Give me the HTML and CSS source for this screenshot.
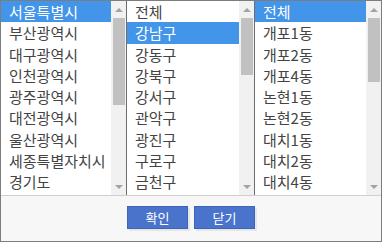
FILE: index.html
```html
<!DOCTYPE html>
<html lang="ko">
<head>
    <meta charset="UTF-8">
    <meta name="viewport" content="width=device-width, initial-scale=1.0">
    <title>지역 선택</title>
    <link rel="stylesheet" href="styles.css">
</head>
<body>

    <div class="dialog">
        <div class="lists">
            <!-- 시/도 -->
            <div class="list list-sido">
                <ul class="items">
                    <li class="on">서울특별시</li>
                    <li>부산광역시</li>
                    <li>대구광역시</li>
                    <li>인천광역시</li>
                    <li>광주광역시</li>
                    <li>대전광역시</li>
                    <li>울산광역시</li>
                    <li>세종특별자치시</li>
                    <li>경기도</li>
                </ul>
                <div class="scrollbar">
                    <span class="btn-arrow"><i class="arrow up"></i></span>
                    <span class="thumb" style="height: 87px"></span>
                    <span class="track-rest"></span>
                    <span class="btn-arrow"><i class="arrow down"></i></span>
                </div>
            </div>

            <!-- 시/군/구 -->
            <div class="list list-gugun">
                <ul class="items">
                    <li>전체</li>
                    <li class="on">강남구</li>
                    <li>강동구</li>
                    <li>강북구</li>
                    <li>강서구</li>
                    <li>관악구</li>
                    <li>광진구</li>
                    <li>구로구</li>
                    <li>금천구</li>
                </ul>
                <div class="scrollbar">
                    <span class="btn-arrow"><i class="arrow up"></i></span>
                    <span class="thumb" style="height: 57px"></span>
                    <span class="track-rest"></span>
                    <span class="btn-arrow"><i class="arrow down"></i></span>
                </div>
            </div>

            <!-- 읍/면/동 -->
            <div class="list list-dong">
                <ul class="items">
                    <li class="on">전체</li>
                    <li>개포1동</li>
                    <li>개포2동</li>
                    <li>개포4동</li>
                    <li>논현1동</li>
                    <li>논현2동</li>
                    <li>대치1동</li>
                    <li>대치2동</li>
                    <li>대치4동</li>
                </ul>
                <div class="scrollbar">
                    <span class="btn-arrow"><i class="arrow up"></i></span>
                    <span class="thumb" style="height: 64px"></span>
                    <span class="track-rest"></span>
                    <span class="btn-arrow"><i class="arrow down"></i></span>
                </div>
            </div>
        </div>

        <div class="footer">
            <button class="button" type="button">확인</button>
            <button class="button" type="button">닫기</button>
        </div>
    </div>

</body>
</html>
```

FILE: styles.css
```css
body {
    margin: 0;
    padding: 0;
    font-family: "Noto Sans CJK KR", "Noto Sans", sans-serif;
    background-color: #fff;
}
.dialog {
    width: 382px;
    height: 242px;
    box-sizing: border-box;
    border: 1px solid #7d7d7d;
    background-color: #f7f7f7;
    display: flex;
    flex-direction: column;
}
.lists {
    display: flex;
    height: 194px;
    border-bottom: 1px solid #cfcfcf;
    background-color: #fff;
}
.list {
    display: flex;
    border-right: 1px solid #6e6e6e;
}
.list-sido {
    width: 125px;
}
.list-gugun {
    width: 127px;
}
.list-dong {
    flex: 1;
    border-right: none;
}

/* option rows */
.items {
    flex: 1;
    margin: 0;
    padding: 0;
    list-style: none;
    overflow: hidden;
}
.items li {
    height: 21.3px;
    line-height: 21px;
    padding-left: 8px;
    font-size: 15px;
    color: #444;
    white-space: nowrap;
}
.items li.on {
    background-color: #4395e9;
    color: #fff;
}

/* fake scrollbar */
.scrollbar {
    width: 15px;
    background-color: #f1f1f1;
    display: flex;
    flex-direction: column;
}
.btn-arrow {
    height: 17px;
    display: flex;
    justify-content: center;
    align-items: center;
}
.arrow {
    width: 0;
    height: 0;
    border-left: 4px solid transparent;
    border-right: 4px solid transparent;
}
.arrow.up {
    border-bottom: 4px solid #a3a3a3;
}
.arrow.down {
    border-top: 4px solid #a3a3a3;
}
.thumb {
    margin: 0 1px 0 2px;
    background-color: #c1c1c1;
}
.track-rest {
    flex: 1;
}

/* buttons */
.footer {
    flex: 1;
    display: flex;
    justify-content: center;
    gap: 6px;
    padding-top: 10px;
}
.button {
    width: 61px;
    height: 23px;
    padding: 0;
    background-color: #4a74cc;
    border: 1px solid #3e64b8;
    color: #fff;
    font-family: "Noto Sans CJK KR", sans-serif;
    font-size: 13px;
    line-height: 21px;
    box-shadow: 2px 2px 0 #e6e6e6;
    cursor: pointer;
}
```
